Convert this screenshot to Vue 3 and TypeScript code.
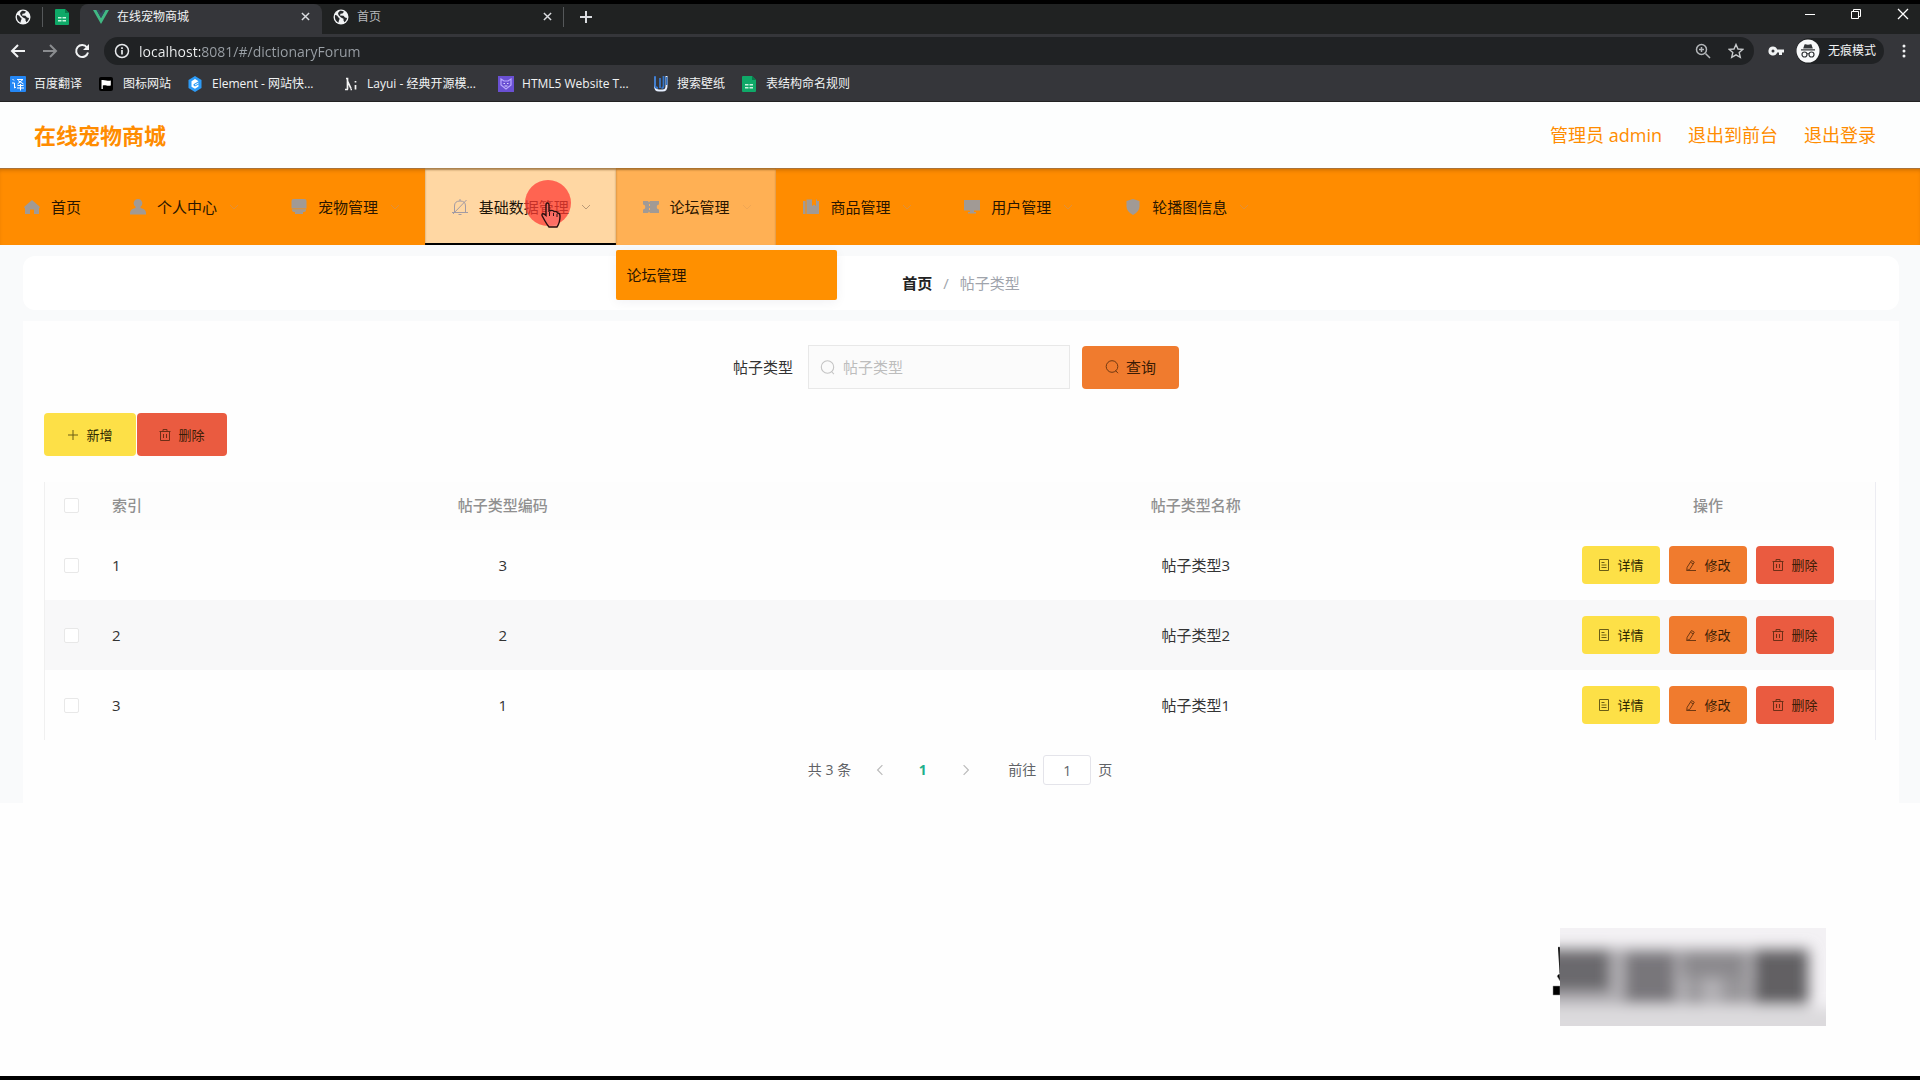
<script setup lang="ts">
import { ref } from 'vue'

interface Bookmark { icon: string; text: string; cut?: boolean }
interface MenuItem { icon: string; text: string; state?: string }
interface ForumType { id: number; code: number; name: string }

const url = ref('localhost:8081/#/dictionaryForum')
const keyword = ref('')
const page = ref('1')

const bookmarks: Bookmark[] = [
  { icon: 'translate', text: '百度翻译' },
  { icon: 'flag', text: '图标网站' },
  { icon: 'element', text: 'Element - 网站快...', cut: true },
  { icon: 'layui', text: 'Layui - 经典开源模...', cut: true },
  { icon: 'html', text: 'HTML5 Website T...', cut: true },
  { icon: 'wallpaper', text: '搜索壁纸' },
  { icon: 'sheet', text: '表结构命名规则' },
]

const menu: MenuItem[] = [
  { icon: 'user', text: '个人中心' },
  { icon: 'goods', text: '宠物管理' },
  { icon: 'bell', text: '基础数据管理', state: 'active' },
  { icon: 'ticket', text: '论坛管理', state: 'opened' },
  { icon: 'files', text: '商品管理' },
  { icon: 'screen', text: '用户管理' },
  { icon: 'shield', text: '轮播图信息' },
]

const rows: ForumType[] = [
  { id: 1, code: 3, name: '帖子类型3' },
  { id: 2, code: 2, name: '帖子类型2' },
  { id: 3, code: 1, name: '帖子类型1' },
]
</script>

<template>
  <div class="window">
    <svg class="defs" aria-hidden="true">
      <symbol id="globe" viewBox="0 0 16 16">
        <circle cx="8" cy="8" r="7.500" fill="#f1f3f4" />
        <path d="M2 6c2 .2 3 1 3 2.200 1 .3 1.800.8 1.500 2-.4 1-1 1.800-.8 3.300C3 12.800 1.500 10 2 6zM7 1.800c1.500 0 3 .3 4 1l-1.500 1.700-2 .3-.5 1.700 3.500.3 1.500 1.700 2 .5c-.2 2-1.500 3.500-2.500 4.200l-1-1.700V9.800L8 8.500 5.500 6 5 4z" fill="#26282a" />
      </symbol>
      <symbol id="sheet" viewBox="0 0 14 16">
        <path d="M1 0h9l4 4v11a1 1 0 0 1-1 1H1a1 1 0 0 1-1-1V1a1 1 0 0 1 1-1z" fill="#0fa968" />
        <path d="M10 0l4 4h-4z" fill="#087b4a" />
        <path d="M3 8h3.500v1.500H3zm4.500 0H11v1.500H7.500zM3 11h3.500v1.500H3zm4.500 0H11v1.500H7.500z" fill="#c9f3df" />
      </symbol>
      <symbol id="close" viewBox="0 0 10 10">
        <path d="M1 1l8 8M9 1L1 9" stroke="currentColor" stroke-width="1.600" fill="none" />
      </symbol>
      <symbol id="search" viewBox="0 0 14 14">
        <circle cx="7" cy="6.500" r="5.800" fill="none" stroke="currentColor" />
        <path d="M10.500 10.500l2.500 2.700" stroke="currentColor" fill="none" />
      </symbol>
      <symbol id="trash" viewBox="0 0 12 12">
        <path d="M.5 2.500h11M4 2.500v-2h4v2M1.500 2.500v9h9v-9M4.500 5v4M7.500 5v4" fill="none" stroke="currentColor" />
      </symbol>
      <symbol id="doc" viewBox="0 0 12 12">
        <path d="M1.500.5h9v11h-9zM3.500 3.500h3M3.500 6h5M3.500 8.500h5" fill="none" stroke="currentColor" />
      </symbol>
      <symbol id="edit" viewBox="0 0 12 12">
        <path d="M6.500 1.500l2.800 1.700-4.600 7.300-2.900.8.300-3zM1.500 11.500H11M5.500 3.200l2.700 1.700" fill="none" stroke="currentColor" />
      </symbol>
      <symbol id="plus" viewBox="0 0 12 12">
        <path d="M6 1v10M1 6h10" fill="none" stroke="currentColor" />
      </symbol>
      <symbol id="down" viewBox="0 0 10 10">
        <path d="M1 3l4 4 4-4" fill="none" stroke="currentColor" />
      </symbol>
    </svg>

    <header class="browser">
      <div class="tabs">
        <button class="pin" aria-label="首页"><svg width="16" height="16"><use href="#globe" /></svg></button>
        <i class="bar"></i>
        <button class="pin sheet" aria-label="表格"><svg width="14" height="16"><use href="#sheet" /></svg></button>
        <div class="tab current">
          <svg width="16" height="14" viewBox="0 0 16 14"><path d="M0 0h3.500L8 8l4.500-8H16L8 14z" fill="#41b883" /><path d="M3.500 0H6l2 3.500L10 0h2.500L8 8z" fill="#35495e" /></svg>
          <span>在线宠物商城</span>
          <button class="x" aria-label="关闭"><svg width="9" height="9"><use href="#close" /></svg></button>
        </div>
        <div class="tab">
          <svg width="16" height="16"><use href="#globe" /></svg>
          <span>首页</span>
          <button class="x" aria-label="关闭"><svg width="9" height="9"><use href="#close" /></svg></button>
        </div>
        <i class="bar"></i>
        <button class="new-tab" aria-label="新标签页"><svg width="14" height="14" viewBox="0 0 14 14"><path d="M7 1v12M1 7h12" stroke="#dadce0" stroke-width="2" /></svg></button>
        <div class="win-controls">
          <button aria-label="最小化"><svg width="12" height="12" viewBox="0 0 12 12"><path d="M1 6.500h10" stroke="#fff" /></svg></button>
          <button aria-label="还原"><svg width="12" height="12" viewBox="0 0 12 12"><path d="M1.500 3.500h7v7h-7zM3.500 3.500v-2h7v7h-2" fill="none" stroke="#fff" /></svg></button>
          <button aria-label="关闭窗口"><svg width="12" height="12" viewBox="0 0 12 12"><path d="M1 1l10 10M11 1L1 11" stroke="#fff" stroke-width="1.300" /></svg></button>
        </div>
      </div>

      <div class="toolbar">
        <button aria-label="后退"><svg width="16" height="16" viewBox="0 0 16 16"><path d="M15 8H2M8 2L2 8l6 6" fill="none" stroke="#f1f3f4" stroke-width="2" /></svg></button>
        <button aria-label="前进"><svg width="16" height="16" viewBox="0 0 16 16"><path d="M1 8h13M8 2l6 6-6 6" fill="none" stroke="#8a8c8f" stroke-width="2" /></svg></button>
        <button aria-label="刷新"><svg width="16" height="16" viewBox="0 0 16 16"><path d="M13 4.500A6 6 0 1 0 14 9.500" fill="none" stroke="#f1f3f4" stroke-width="2" /><path d="M15 1v6H9z" fill="#f1f3f4" /></svg></button>
        <div class="omnibox">
          <svg width="16" height="16" viewBox="0 0 16 16"><circle cx="8" cy="8" r="6.500" fill="none" stroke="#e8eaed" stroke-width="1.500" /><path d="M8 7v4.500M8 4.200v1.700" stroke="#e8eaed" stroke-width="1.700" /></svg>
          <input v-model="url" aria-label="地址" />
          <svg class="zoom" width="16" height="16" viewBox="0 0 16 16"><circle cx="6.500" cy="6.500" r="5" fill="none" stroke="#b4b7ba" stroke-width="1.500" /><path d="M10.500 10.500l4.500 4.500M4 6.500h5M6.500 4v5" stroke="#b4b7ba" stroke-width="1.500" /></svg>
          <svg width="16" height="16" viewBox="0 0 16 16"><path d="M8 1.500l2 4.500 4.800.4-3.600 3.200 1.100 4.800L8 11.900l-4.300 2.500 1.100-4.800L1.200 6.400 6 6z" fill="none" stroke="#c8cbcd" stroke-width="1.400" /></svg>
        </div>
        <svg class="key" width="16" height="12" viewBox="0 0 16 12"><path d="M5 1.500a4.500 4.500 0 1 0 4.200 6H11V10h3V7.500h2v-3H9.200A4.500 4.500 0 0 0 5 1.500zm0 3a1.500 1.500 0 1 1 0 3 1.500 1.500 0 0 1 0-3z" fill="#f1f3f4" fill-rule="evenodd" /></svg>
        <div class="incognito">
          <svg width="24" height="24" viewBox="0 0 24 24"><circle cx="12" cy="12" r="11.500" fill="#f8f9fa" /><path d="M8.500 5.500c1-.7 2 .2 3.500.2s2.500-.9 3.500-.2l1.300 4H7.200zM5 10.300h14v1.200H5z" fill="#333639" /><circle cx="8.500" cy="15.500" r="2.500" fill="none" stroke="#333639" stroke-width="1.200" /><circle cx="15.500" cy="15.500" r="2.500" fill="none" stroke="#333639" stroke-width="1.200" /><path d="M11 15q1-1 2 0" stroke="#333639" fill="none" /></svg>
          <span>无痕模式</span>
        </div>
        <button class="more" aria-label="更多"><svg width="4" height="14" viewBox="0 0 4 14"><circle cx="2" cy="2" r="1.500" fill="#f1f3f4" /><circle cx="2" cy="7" r="1.500" fill="#f1f3f4" /><circle cx="2" cy="12" r="1.500" fill="#f1f3f4" /></svg></button>
      </div>

      <nav class="bookmarks">
        <a v-for="b in bookmarks" :key="b.text" href="#" :class="{ cut: b.cut }">
          <svg width="16" height="16" viewBox="0 0 16 16">
            <template v-if="b.icon === 'translate'">
              <rect width="16" height="16" rx="1" fill="#2487f5" />
              <path d="M2.500 3l1.500 1.500M2 7h2.500v5l1.500-1M7 3.500h6L7.500 8M8 4.500L13.500 8M7.500 9.500h6M7 12h7M10.500 8v6.500" fill="none" stroke="#fff" />
            </template>
            <template v-else-if="b.icon === 'flag'">
              <rect x="0" y="1" width="14" height="14" rx="2" fill="#000" />
              <path d="M2.500 4v9h1.300V9.500c3-1 4 1 8 0V4.500c-3 1-5-1-9.300-.5z" fill="#fff" />
            </template>
            <template v-else-if="b.icon === 'element'">
              <path d="M7 0l6.500 4v8L7 16 .5 12V4z" fill="#2d9bf7" />
              <path d="M7 3l3.500 2.200-5 3V9.500L7 10.500l3.500-2v2L7 12.800 3.500 10.700V5.200zM10.500 6.500v1L7 9.500V8.500z" fill="#fff" />
            </template>
            <template v-else-if="b.icon === 'layui'">
              <path d="M3 2.500h1.500v11M4.500 5l3.500 7.500M2 13.500h3M7.500 13.500H9M12.500 5v1.500M12.500 9v4.500" fill="none" stroke="#f4f4f4" stroke-width="1.700" />
            </template>
            <template v-else-if="b.icon === 'html'">
              <rect width="16" height="16" fill="#6a50d3" />
              <path d="M3 3l3 2h4l3-2v6l-5 4-5-4z" fill="none" stroke="#b9a8ff" stroke-width="1.200" />
              <path d="M5.500 7.500h1.500M9 7.500h1.500M6.500 10h3" stroke="#e0d8ff" />
            </template>
            <template v-else-if="b.icon === 'wallpaper'">
              <path d="M2 1v9q0 4.500 4 4.500h3.500q4 0 4-4.500V0" fill="none" stroke="#e6efff" stroke-width="2" />
              <path d="M2 0v9q0 3 3 3M7 2v10M10.500 0v10q0 2-2 2M13.500 1v8" fill="none" stroke="#3474c9" stroke-width="1.800" />
            </template>
            <use v-else href="#sheet" width="14" height="16" />
          </svg>
          <span>{{ b.text }}</span>
        </a>
      </nav>
    </header>

    <div class="site-head">
      <h1>在线宠物商城</h1>
      <div class="account">
        <span>管理员 admin</span>
        <a href="#">退出到前台</a>
        <a href="#">退出登录</a>
      </div>
    </div>

    <nav class="menu">
      <ul>
        <li>
          <a href="#" class="home">
            <svg width="16" height="16" viewBox="0 0 16 16"><path d="M8 1L0 8l1 1.500V15h5v-4.500h4V15h5V9.500L16 8z" /></svg>
            <span>首页</span>
          </a>
        </li>
        <li v-for="m in menu" :key="m.text" :class="m.state">
          <a href="#">
            <svg width="16" height="16" viewBox="0 0 16 16">
              <path v-if="m.icon === 'user'" d="M8 0a4.300 4.300 0 0 1 2.500 7.800V9q5.500 1 5.500 5v1.500H0V14q0-4 5.500-5V7.800A4.300 4.300 0 0 1 8 0z" />
              <path v-else-if="m.icon === 'goods'" d="M2.500 0h11a2 2 0 0 1 2 2v7.500H.5V2a2 2 0 0 1 2-2zM1 10.200h14v1a2 2 0 0 1-2 1.800h-1V15H4v-2H3a2 2 0 0 1-2-1.800z" />
              <path v-else-if="m.icon === 'bell'" class="line" d="M2.500 13.500V7q0-5 5.500-5t5.500 5v6.500M0 13.500h16M6.500 15.500h3M8 2V0M1 15L14.500 1" />
              <path v-else-if="m.icon === 'ticket'" d="M0 2h5l1 1.500L7 2h9v3.500c-3 0-3 5 0 5V14H7l-1-1.500L5 14H0v-3.500c3 0 3-5 0-5zM6 5v2h1V5zm0 4v2h1V9z" />
              <path v-else-if="m.icon === 'files'" d="M0 2h2.500v13H0zM3.500.5H9V7l2-1.500L13 7V.5h1V2h2v13H3.500z" />
              <path v-else-if="m.icon === 'screen'" d="M0 1h16v10.500h-6V13h2v1.500H4V13h2v-1.500H0z" />
              <path v-else d="M8 0l6.500 2v5.500q0 5-6.500 8.500-6.500-3.500-6.500-8.500V2z" />
            </svg>
            <span>{{ m.text }}</span>
            <svg class="chev" width="10" height="10"><use href="#down" /></svg>
          </a>
          <svg v-if="m.state === 'active'" class="pointer" width="48" height="52" viewBox="0 0 48 52">
            <circle cx="24" cy="24" r="23" fill="#ff3b35" fill-opacity=".74" />
            <path d="M21 42l-3-5.500q-.3-2.500 2-1.500l2 1.500V26q0-2 1.500-2t1.500 2v6q4-1.500 5 .5 3-.5 3.500 1.500 2.500 0 2.500 3 0 7-3 11h-8q-2-2.500-4-6z" fill="#fb7169" fill-opacity=".8" stroke="#2a1010" stroke-width="1.400" />
            <path d="M25.500 33v4M29.500 34v3M33 35v3" stroke="#2a1010" />
          </svg>
          <a v-if="m.state === 'opened'" href="#" class="submenu">论坛管理</a>
        </li>
      </ul>
    </nav>

    <main>
      <div class="content">
        <nav class="card crumbs">
          <a href="#">首页</a><i>/</i><span>帖子类型</span>
        </nav>

        <section class="card body">
          <form class="search" @submit.prevent>
            <label for="kw">帖子类型</label>
            <div class="field">
              <svg width="15" height="15"><use href="#search" /></svg>
              <input id="kw" v-model="keyword" placeholder="帖子类型" />
            </div>
            <button class="btn orange query"><svg width="14" height="14"><use href="#search" /></svg>查询</button>
          </form>

          <div class="tools">
            <button class="btn yellow"><svg width="12" height="12"><use href="#plus" /></svg>新增</button>
            <button class="btn red"><svg width="12" height="12"><use href="#trash" /></svg>删除</button>
          </div>

          <table>
            <colgroup><col class="c1" /><col class="c2" /><col class="c3" /><col class="c4" /><col class="c5" /></colgroup>
            <thead>
              <tr>
                <th><input type="checkbox" aria-label="全选" /></th>
                <th class="idx">索引</th>
                <th>帖子类型编码</th>
                <th>帖子类型名称</th>
                <th>操作</th>
              </tr>
            </thead>
            <tbody>
              <tr v-for="r in rows" :key="r.id">
                <td><input type="checkbox" :aria-label="r.name" /></td>
                <td class="idx">{{ r.id }}</td>
                <td>{{ r.code }}</td>
                <td>{{ r.name }}</td>
                <td>
                  <div class="ops">
                    <button class="btn small yellow"><svg width="12" height="12"><use href="#doc" /></svg>详情</button>
                    <button class="btn small orange"><svg width="12" height="12"><use href="#edit" /></svg>修改</button>
                    <button class="btn small red"><svg width="12" height="12"><use href="#trash" /></svg>删除</button>
                  </div>
                </td>
              </tr>
            </tbody>
          </table>

          <div class="pager">
            <span>共 3 条</span>
            <button aria-label="上一页"><svg class="prev" width="12" height="12"><use href="#down" /></svg></button>
            <button class="num">1</button>
            <button aria-label="下一页"><svg class="next" width="12" height="12"><use href="#down" /></svg></button>
            <label class="jump">前往 <input v-model="page" /> 页</label>
          </div>
        </section>
      </div>
    </main>

    <svg class="stamp" width="274" height="98" viewBox="0 0 274 98" aria-hidden="true">
      <defs>
        <filter id="soft" filterUnits="userSpaceOnUse" x="-60" y="-40" width="400" height="200"><feGaussianBlur stdDeviation="7" /></filter>
        <clipPath id="frame"><rect x="8" width="266" height="98" /></clipPath>
      </defs>
      <path d="M6 19h2v26l-3 3 3 5M1 58h7v9H1z" fill="#000" stroke="#999" stroke-width=".5" />
      <g clip-path="url(#frame)">
        <rect x="8" width="266" height="98" fill="#f3f1f4" />
        <g filter="url(#soft)">
          <path d="M-40 80h360v60H-40z" fill="#dcdadd" />
          <path d="M-40 20h298v58H-40z" fill="#b3b1b5" />
          <path d="M-40 22h98v42h-98z" fill="#6b696d" />
          <path d="M73 24h50v50H73z" fill="#78767a" />
          <path d="M130 24h64v26h-64z" fill="#8b898d" />
          <path d="M136 48h14v28h-14zM170 50h26v24h-26z" fill="#98969a" />
          <path d="M202 22h54v54h-54z" fill="#626064" />
        </g>
      </g>
    </svg>
    <div class="edge"></div>
  </div>
</template>

<style>
body {
  margin: 0;
  background: #fefefe;
}
</style>

<style scoped>
.window {
  position: relative;
  display: flex;
  flex-direction: column;
  min-height: 100vh;
  box-sizing: border-box;
  border-top: 4px solid #000;
  font: 15px/20px "Open Sans", "Noto Sans CJK SC", sans-serif;
  color: #333;
}
.defs { position: absolute; width: 0; height: 0; }
svg { display: block; flex: none; }
a { color: inherit; text-decoration: none; }
i { font-style: normal; }
button {
  display: flex;
  align-items: center;
  justify-content: center;
  padding: 0;
  border: 0;
  background: none;
  font: inherit;
  color: inherit;
}
input { font: inherit; box-sizing: border-box; }

/* browser chrome */
.browser {
  background: #35363a;
  color: #f1f3f4;
  font-size: 12px;
  border-bottom: 1px solid #222;
}
.tabs { display: flex; align-items: flex-start; height: 30px; background: #202222; padding-right: 5px; }
.pin { width: 42px; padding-left: 4px; height: 25px; }
.pin.sheet { width: 37px; padding: 0; }
.bar { width: 1px; height: 20px; margin-top: 3px; background: #55585a; }
.tab { display: flex; align-items: center; width: 216px; height: 30px; box-sizing: content-box; padding: 0 12px 5px 13px; height: 25px; }
.tab { width: 216px; }
.tab.current { background: #35363a; border-radius: 8px 8px 0 0; }
.tab + .tab { padding: 0 11px 5px; }
.tab { box-sizing: border-box; width: 241px; height: 30px; }
.tab.current { width: 242px; }
.tab span { flex: 1; padding-left: 8px; }
.tab:not(.current) span { color: #b5b8bb; }
.x { width: 9px; height: 20px; color: #dadce0; }
.new-tab { width: 44px; height: 25px; }
.win-controls { display: flex; margin-left: auto; height: 20px; }
.win-controls button { width: 46px; }
.win-controls button:last-child { width: 24px; margin-left: 12px; }
.toolbar { display: flex; align-items: center; height: 34px; padding: 0 12px 0 10px; gap: 16px; }
.omnibox {
  display: flex;
  align-items: center;
  flex: 1;
  height: 28px;
  margin-left: -2px;
  padding: 0 10px;
  border-radius: 14px;
  background: #202224;
}
.omnibox input {
  flex: 1;
  height: 24px;
  margin-left: 9px;
  padding: 0;
  border: 0;
  outline: 0;
  font-size: 14px;
  color: transparent;
  background: linear-gradient(90deg, #f1f3f4 61px, #9aa0a6 61px);
  -webkit-background-clip: text;
  background-clip: text;
}
.zoom { margin-right: 17px; }
.key { margin-left: -2px; }
.incognito { display: flex; align-items: center; gap: 8px; height: 26px; margin-left: -4px; padding-right: 8px; border-radius: 13px; background: #202224; }
.more { width: 8px; height: 24px; }
.bookmarks { display: flex; align-items: center; height: 32px; padding: 0 10px 1px; gap: 17px; white-space: nowrap; }
.bookmarks a { display: flex; align-items: center; gap: 8px; }
.bookmarks .cut span { min-width: 114px; }

/* site header */
.site-head {
  display: flex;
  align-items: center;
  justify-content: space-between;
  height: 66px;
  padding: 0 44px 0 34px;
  background: #fdfefe;
  color: #ff8c00;
}
h1 { margin: 0; font-size: 22px; line-height: 30px; font-weight: 700; }
.account { display: flex; gap: 26px; font-size: 18px; line-height: 26px; }

.menu {
  position: relative;
  height: 77px;
  background: #ff8c00;
  box-shadow: inset 0 1px 0 #a9733a, inset 0 4px 4px -2px rgba(120, 60, 0, .4);
  color: #2a1600;
}
.menu ul { display: flex; height: 77px; max-width: 1274px; margin: 0; padding: 0; list-style: none; }
.menu li { position: relative; flex: 1 0 auto; }
.menu li:first-child { flex-grow: 0; }
.menu li > a:first-child { display: flex; align-items: center; height: 77px; padding: 0 24px 0 27px; box-sizing: border-box; }
.menu li > a.home:first-child { padding: 0 22px 0 24px; }
.menu a svg { fill: #a19a95; }
.menu a span { margin-left: 11px; }
.menu .line { fill: none; stroke: #a39ba3; stroke-width: 1; }
.menu a .chev { margin-left: 12px; color: #e0903a; }
.active { background: #ffd7a3; color: #1c1408; box-shadow: inset 0 2px 2px rgba(110, 70, 20, .6), inset 0 -2px 0 #000; }
.active a .chev { color: #b99a78; }
.opened { background: #ffb054; box-shadow: inset 0 2px 2px rgba(110, 70, 20, .6); }
.opened a .chev { color: #f0a654; }
.pointer { position: absolute; left: 99px; top: 11px; }
.submenu {
  position: absolute;
  z-index: 2;
  left: 0;
  top: 82px;
  width: 221px;
  height: 50px;
  box-sizing: border-box;
  padding-left: 11px;
  line-height: 50px;
  border-radius: 2px;
  background: #ff9000;
  box-shadow: 0 2px 12px rgba(0, 0, 60, .06);
}

/* page */
main { flex: 1; }
.content { padding: 11px 21px 0 23px; background: #f9fafb; }
.card { background: #fff; }
.crumbs {
  display: flex;
  align-items: center;
  justify-content: center;
  height: 54px;
  border-radius: 12px;
  color: #a0a4ac;
}
.crumbs a { color: #222; font-weight: 700; }
.crumbs i { padding: 0 11px; }
.body { margin-top: 11px; padding: 24px 23px 18px 21px; background: #fefefe; }
.search { display: flex; align-items: center; justify-content: center; height: 44px; padding-right: 8px; }
.search label { margin-right: 15px; }
.field {
  display: flex;
  align-items: center;
  width: 262px;
  height: 44px;
  margin-right: 12px;
  padding-left: 11px;
  box-sizing: border-box;
  border: 1px solid #e8e8e8;
  background: #fbfbfb;
  color: #c4c4c4;
}
.field input { flex: 1; min-width: 0; height: 36px; padding: 0 0 0 8px; border: 0; outline: 0; background: none; }
.field input::placeholder { color: #bdbdbd; opacity: 1; }
.btn { height: 43px; gap: 7px; border-radius: 4px; font-size: 13px; line-height: 20px; color: #3a1c05; }
.btn svg { opacity: .7; }
.query { width: 97px; font-size: 15px; }
.yellow { background: #fde047; color: #2c2600; }
.orange { background: #f07b2e; }
.red { background: #ea5b40; }
.tools { display: flex; gap: 1px; margin: 24px 0 26px; }
.tools .btn { width: 92px; }
.tools .red { width: 90px; }

table {
  width: 100%;
  table-layout: fixed;
  border-collapse: separate;
  border-spacing: 0;
  border-left: 1px solid #f0f0f0;
  border-right: 1px solid #ececf2;
}
.c1 { width: 53px; }
.c2 { width: 57px; }
.c3 { width: 38%; }
.c5 { width: 334px; }
th { height: 46px; padding: 0 0 2px; font-weight: 500; color: #909090; background: #fdfdfd; }
td { height: 70px; padding: 0; text-align: center; }
th.idx, td.idx { padding-left: 14px; text-align: left; }
tbody tr:nth-child(2) td { background: #f8f8f9; }
table input {
  display: block;
  appearance: none;
  width: 15px;
  height: 15px;
  margin: 0 auto;
  border: 1px solid #e8e8e8;
  border-radius: 2px;
  background: #fff;
}
.ops { display: flex; justify-content: center; gap: 9px; }
.small { width: 78px; height: 38px; }

.pager { display: flex; align-items: center; justify-content: center; margin-top: 15px; height: 30px; font-size: 14px; color: #606266; }
.pager button { width: 43px; height: 30px; color: #bbb; }
.pager button:nth-of-type(1) { margin-left: 7px; }
.pager .num { color: #1fb08c; font-weight: 700; }
.prev { transform: rotate(90deg); }
.next { transform: rotate(-90deg); }
.jump { display: flex; align-items: center; gap: 7px; margin-left: 21px; }
.jump input { width: 48px; height: 30px; padding: 0; border: 1px solid #e4e4ea; border-radius: 3px; background: #fff; text-align: center; color: #606266; }

.stamp { position: absolute; right: 94px; bottom: 54px; }
.edge { height: 4px; background: #000; }
</style>
